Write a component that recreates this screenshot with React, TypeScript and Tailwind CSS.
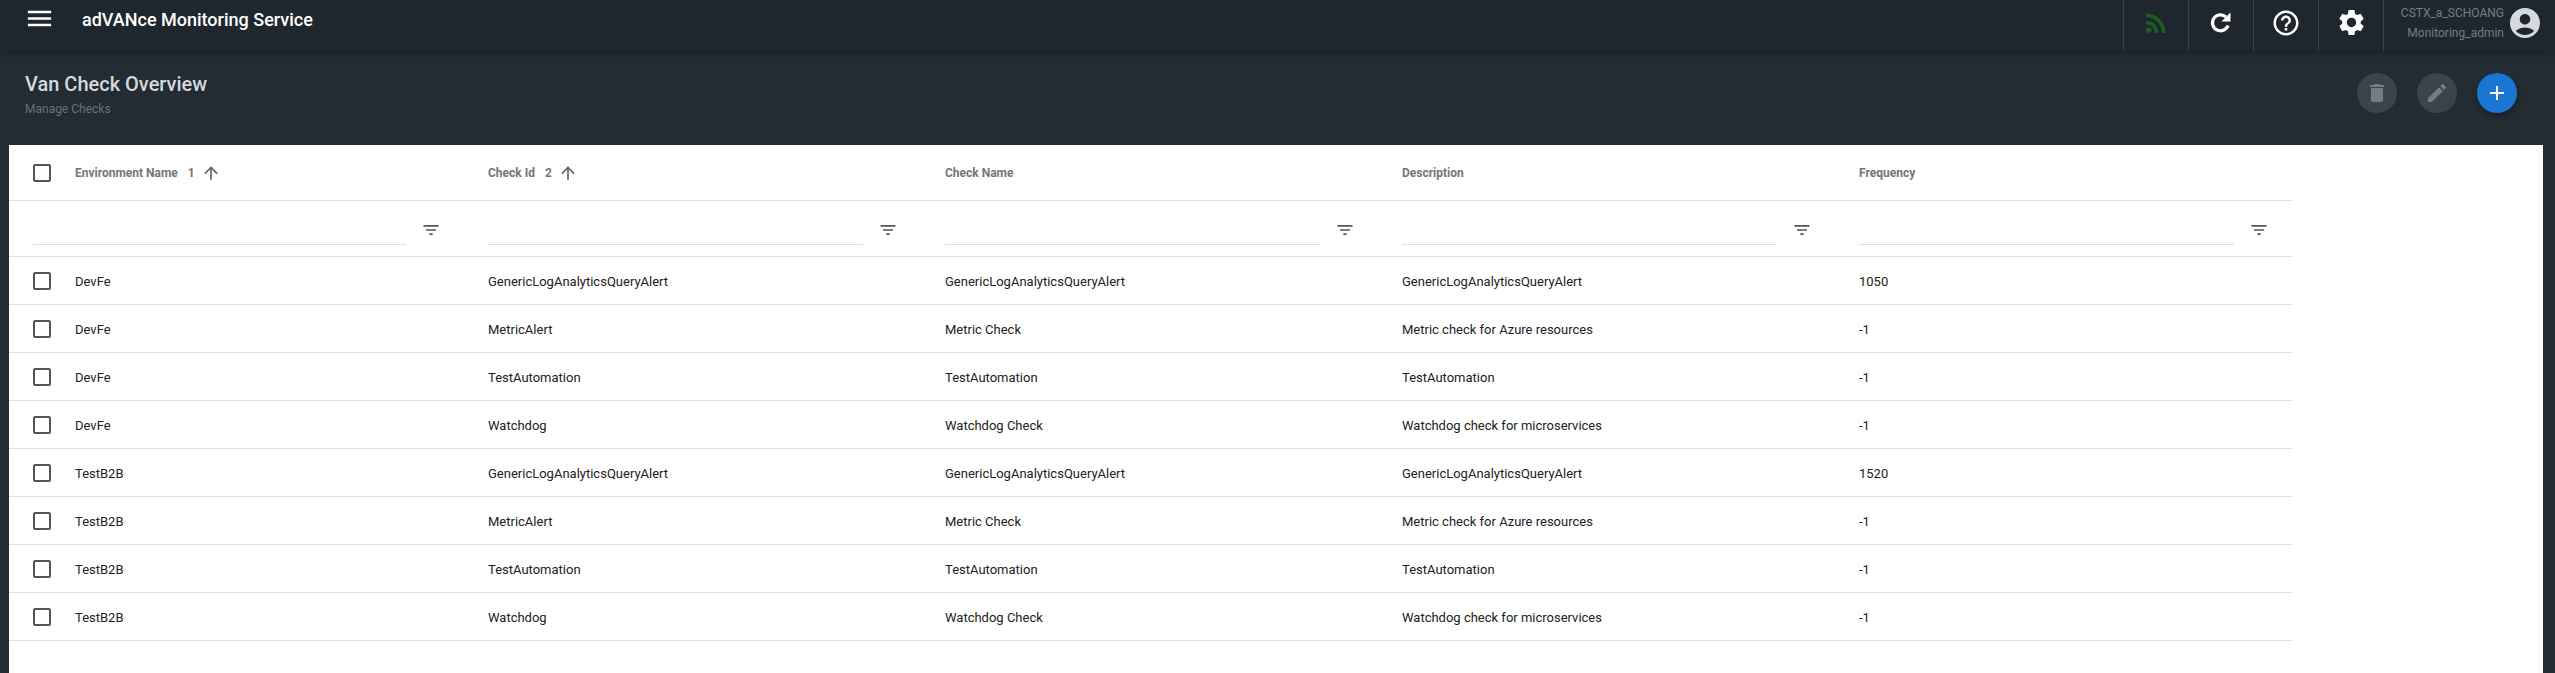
import React from "react";
import {
  MdMenu, MdRssFeed, MdHelpOutline, MdSettings, MdAccountCircle, MdDelete, MdEdit, MdAdd, MdFilterList, MdArrowUpward,
} from "react-icons/md";

const rows = [
  ["DevFe", "GenericLogAnalyticsQueryAlert", "GenericLogAnalyticsQueryAlert", "GenericLogAnalyticsQueryAlert", "1050"],
  ["DevFe", "MetricAlert", "Metric Check", "Metric check for Azure resources", "-1"],
  ["DevFe", "TestAutomation", "TestAutomation", "TestAutomation", "-1"],
  ["DevFe", "Watchdog", "Watchdog Check", "Watchdog check for microservices", "-1"],
  ["TestB2B", "GenericLogAnalyticsQueryAlert", "GenericLogAnalyticsQueryAlert", "GenericLogAnalyticsQueryAlert", "1520"],
  ["TestB2B", "MetricAlert", "Metric Check", "Metric check for Azure resources", "-1"],
  ["TestB2B", "TestAutomation", "TestAutomation", "TestAutomation", "-1"],
  ["TestB2B", "Watchdog", "Watchdog Check", "Watchdog check for microservices", "-1"],
];

const grid = "grid grid-cols-[479px_457px_457px_457px_433px] w-[2283px] border-b border-[#e0e0e0]";

function Check() {
  return <span className="block w-[18px] h-[18px] rounded-[2px] border-2 border-[#555555] shrink-0" />;
}

function Sort({ n }: { n: string }) {
  return (
    <>
      <span className="ml-[10px]">{n}</span>
      <MdArrowUpward className="ml-[6px] text-[#666666]" size={20} />
    </>
  );
}

function Filter({ first }: { first?: boolean }) {
  return (
    <div className={`flex items-start ${first ? "pl-6" : ""}`}>
      <div className={`h-[44px] border-b border-[#dddddd] ${first ? "w-[373px]" : "w-[375px]"}`} />
      <MdFilterList className="ml-[15px] mt-[19px] text-[#555555]" size={20} />
    </div>
  );
}

function Divider({ children }: { children: React.ReactNode }) {
  return <div className="w-[65px] h-full border-l border-[#394046] flex items-center justify-center pb-[6px]">{children}</div>;
}

export default function App() {
  return (
    <div className="w-[2555px] h-[673px] overflow-hidden bg-[#232b33] font-['Roboto',sans-serif] flex flex-col">
      <header className="h-[51px] shrink-0 bg-[#1f272e] flex items-center shadow-[0_2px_6px_rgba(0,0,0,0.25)] z-10">
        <MdMenu className="ml-[24px] mb-[15px] text-white" size={31} />
        <span className="ml-[27px] mb-[12px] text-[18px] font-medium text-white">adVANce Monitoring Service</span>
        <div className="ml-auto flex h-full items-center">
          <Divider><MdRssFeed className="text-[#1b5e20]" size={30} /></Divider>
          <Divider>
            <svg width="24" height="24" viewBox="0 0 24 24" fill="none" stroke="white" strokeWidth="3.2">
              <path d="M19 14.5A8 8 0 1 1 17 6" />
              <path d="M21.5 1.5V10.5H12.5Z" fill="white" stroke="none" />
            </svg>
          </Divider>
          <Divider><MdHelpOutline className="text-white" size={30} /></Divider>
          <Divider><MdSettings className="text-white" size={31} /></Divider>
          <div className="w-[172px] h-full border-l border-[#394046] flex items-center justify-end pr-[12px] pb-[6px]">
            <div className="mr-[3px] text-right text-[12px] leading-[20px] text-[#767c82] whitespace-nowrap">
              <div>CSTX_a_SCHOANG</div>
              <div>Monitoring_admin</div>
            </div>
            <MdAccountCircle className="text-[#d5dade]" size={36} />
          </div>
        </div>
      </header>

      <section className="h-[94px] shrink-0 flex">
        <div className="pl-[25px] pt-[19px]">
          <h1 className="text-[20px] leading-[28px] font-medium text-[#d5d9dc]">Van Check Overview</h1>
          <p className="mt-[3px] text-[12px] leading-[16px] text-[#6a7177]">Manage Checks</p>
        </div>
        <div className="ml-auto mr-[38px] mt-[22px] flex gap-[20px]">
          <span className="w-10 h-10 rounded-full bg-[#3c444b] flex items-center justify-center"><MdDelete className="text-[#777c81]" size={24} /></span>
          <span className="w-10 h-10 rounded-full bg-[#3c444b] flex items-center justify-center"><MdEdit className="text-[#777c81]" size={24} /></span>
          <span className="w-10 h-10 rounded-full bg-[#1976d2] flex items-center justify-center shadow-[0_3px_5px_rgba(0,0,0,0.3)]"><MdAdd className="text-white" size={24} /></span>
        </div>
      </section>

      <main className="ml-[9px] mr-[12px] flex-1 bg-white">
        <div className={`${grid} h-[56px] text-[12px] font-bold text-[#757575]`}>
          <div className="flex items-center pl-6">
            <Check />
            <span className="ml-6">Environment Name</span>
            <Sort n="1" />
          </div>
          <div className="flex items-center">Check Id<Sort n="2" /></div>
          <div className="flex items-center">Check Name</div>
          <div className="flex items-center">Description</div>
          <div className="flex items-center">Frequency</div>
        </div>
        <div className={`${grid} h-[56px]`}>
          <Filter first />
          <Filter />
          <Filter />
          <Filter />
          <Filter />
        </div>
        {rows.map((r, i) => (
          <div key={i} className={`${grid} h-[48px] text-[13px] text-[#212121]`}>
            <div className="flex items-center pl-6">
              <Check />
              <span className="ml-6 pt-[2px]">{r[0]}</span>
            </div>
            <div className="flex items-center pt-[2px]">{r[1]}</div>
            <div className="flex items-center pt-[2px]">{r[2]}</div>
            <div className="flex items-center pt-[2px]">{r[3]}</div>
            <div className="flex items-center pt-[2px]">{r[4]}</div>
          </div>
        ))}
      </main>
    </div>
  );
}
